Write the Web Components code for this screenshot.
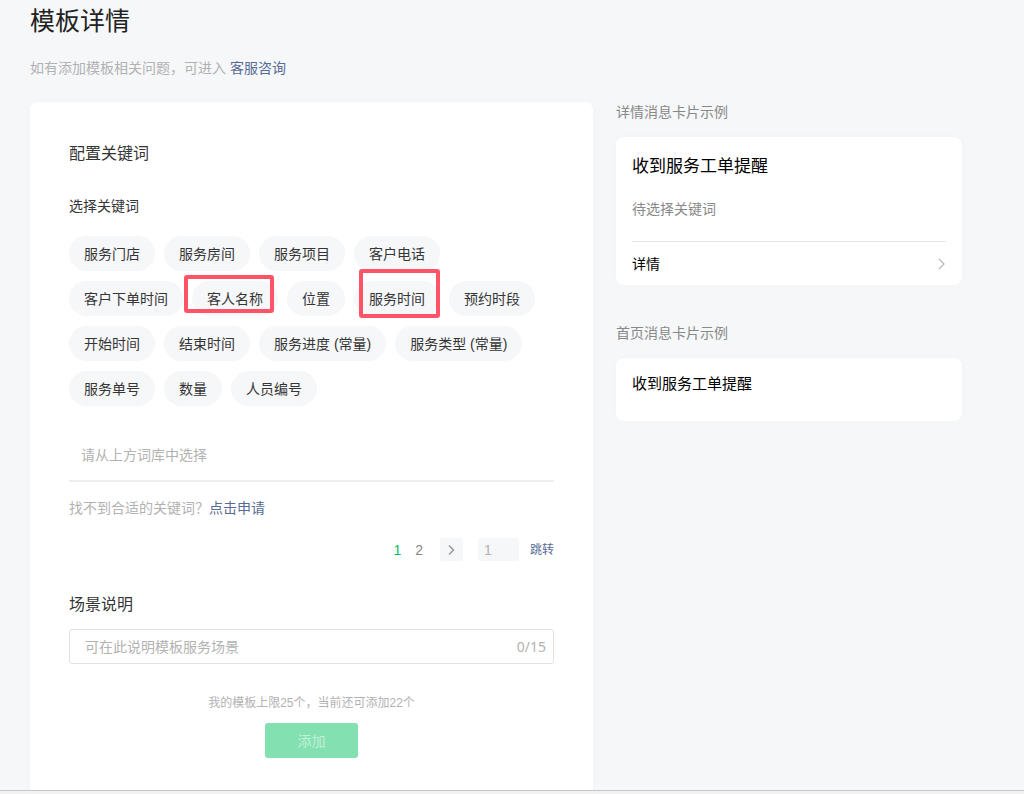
<!DOCTYPE html>
<html lang="zh-CN">
<head>
<meta charset="utf-8">
<title>模板详情</title>
<style>
  html, body {
    margin: 0;
    height: 100%;
  }

  body {
    background: #f5f7f9;
    color: #353535;
    font-family: "Liberation Sans", "Noto Sans CJK SC", sans-serif;
    font-size: 14px;
    line-height: 20px;
    --link: #576b95;
    --muted: #b2b2b2;
    --soft: #f5f7f9;
  }
</style>
</head>
<body>
<template-page>
  <span slot="title">模板详情</span>
  <span slot="tip">如有添加模板相关问题，可进入</span>
  <text-link slot="tip" text="客服咨询"></text-link>

  <keyword-panel slot="main"></keyword-panel>

  <preview-card slot="side" label="详情消息卡片示例" heading="收到服务工单提醒" action="详情">待选择关键词</preview-card>
  <preview-card slot="side" label="首页消息卡片示例" heading="收到服务工单提醒" compact></preview-card>
</template-page>

<script>
"use strict";

(() => {
  customElements.define("template-page", class extends HTMLElement {
    constructor() {
      super();

      this.attachShadow({mode: "open"}).innerHTML = `
      <style>
      :host {
        display: flex;
        flex-direction: column;
        height: 100vh;
        overflow: hidden;
      }

      .content {
        flex: 1;
        display: flex;
        flex-direction: column;
        min-height: 0;
        overflow: hidden;
        box-sizing: border-box;
        padding: 3px 62px 0 30px;
      }

      h1 {
        margin: 0;
        color: #222;
        font-size: 25px;
        font-weight: 400;
        line-height: 36px;
      }

      .tip {
        display: flex;
        gap: 4px;
        margin: 19px 0 24px;
        color: var(--muted);
      }

      .columns {
        flex: 1;
        display: grid;
        grid-template-columns: 563fr 346fr;
        gap: 23px;
      }

      .side {
        display: flex;
        flex-direction: column;
        gap: 38px;
      }

      footer {
        height: 3px;
        background: #f2f2f2;
        border-top: 1px solid #c8c8c8;
      }
      </style>
      <div class="content">
        <h1><slot name="title"></slot></h1>
        <div class="tip"><slot name="tip"></slot></div>
        <div class="columns">
          <main><slot name="main"></slot></main>
          <aside class="side"><slot name="side"></slot></aside>
        </div>
      </div>
      <footer></footer>
      `;
    }
  });

  customElements.define("text-link", class extends HTMLElement {
    constructor() {
      super();

      this.attachShadow({mode: "open"}).innerHTML = `
      <style>
      :host {
        display: inline-block;
      }

      a {
        color: var(--link);
        text-decoration: none;
      }
      </style>
      <a href="#"></a>
      `;

      this.shadowRoot.querySelector("a").textContent = this.getAttribute("text");
    }
  });

  customElements.define("keyword-chip", class extends HTMLElement {
    constructor() {
      super();

      this.attachShadow({mode: "open"}).innerHTML = `
      <style>
      :host {
        display: block;
        position: relative;
      }

      button {
        display: block;
        height: 35px;
        padding: 0 15px;
        border: 0;
        border-radius: 18px;
        background: var(--soft);
        color: #353535;
        font: inherit;
        white-space: nowrap;
        cursor: pointer;
      }

      /* red frame laid over a highlighted keyword */
      :host([mark])::after {
        content: "";
        position: absolute;
        border: 4px solid #ff5468;
        border-radius: 3px;
        pointer-events: none;
      }

      :host([mark="wide"])::after {
        inset: -6px 4px 3px -8px;
      }

      :host([mark="tall"])::after {
        inset: -12px 0 -2px 5px;
      }
      </style>
      <button type="button"><slot></slot></button>
      `;
    }
  });

  customElements.define("page-nav", class extends HTMLElement {
    constructor() {
      super();

      this.attachShadow({mode: "open"}).innerHTML = `
      <style>
      :host {
        display: block;
      }

      nav {
        display: flex;
        align-items: center;
        justify-content: flex-end;
        height: 23px;
      }

      .num {
        color: #888;
        text-decoration: none;
        margin-right: 14px;
      }

      .num.current {
        color: #07c160;
      }

      button {
        display: flex;
        align-items: center;
        justify-content: center;
        width: 23px;
        height: 23px;
        margin: 0 15px 0 3px;
        padding: 0;
        border: 0;
        border-radius: 2px;
        background: var(--soft);
      }

      input {
        box-sizing: border-box;
        width: 41px;
        height: 23px;
        margin: 0 11px 0 0;
        padding: 0 6px;
        border: 0;
        border-radius: 2px;
        background: var(--soft);
        color: #353535;
        font: inherit;
      }

      input::placeholder {
        color: var(--muted);
      }

      text-link {
        font-size: 12px;
      }
      </style>
      <nav aria-label="分页">
        <a class="num current" href="#">1</a>
        <a class="num" href="#">2</a>
        <button type="button" aria-label="下一页">
          <svg width="8" height="12" viewBox="0 0 8 12" fill="none" stroke="#999" stroke-width="1.5"><path d="M2 1.500l4.500 4.500L2 10.500"/></svg>
        </button>
        <input type="text" placeholder="1" aria-label="页码">
        <text-link text="跳转"></text-link>
      </nav>
      `;
    }
  });

  customElements.define("keyword-panel", class extends HTMLElement {
    constructor() {
      super();

      this.attachShadow({mode: "open"}).innerHTML = `
      <style>
      :host {
        display: block;
        box-sizing: border-box;
        min-height: 100%;
        padding: 40px 39px;
        border-radius: 8px 8px 0 0;
        background: #fff;
        box-shadow: 0 0 8px rgba(0, 0, 0, 0.02);
      }

      h2, h3 {
        margin: 0;
        color: #353535;
        font-size: 16px;
        font-weight: 400;
        line-height: 24px;
      }

      h3 {
        margin-top: 30px;
        font-size: 14px;
        line-height: 20px;
      }

      .chips {
        display: flex;
        flex-wrap: wrap;
        gap: 10px 9px;
        margin: 20px 0 24px;
      }

      input {
        display: block;
        box-sizing: border-box;
        width: 100%;
        border: 0;
        background: none;
        color: #353535;
        font: inherit;
      }

      input::placeholder {
        color: var(--muted);
      }

      .picked {
        height: 52px;
        padding: 0 12px;
        border-bottom: 2px solid #eee;
      }

      .missing {
        margin: 16px 0 20px;
        color: var(--muted);
      }

      .scene-title {
        display: block;
        margin: 32px 0 12px;
        font-size: 16px;
        line-height: 24px;
      }

      .field {
        display: flex;
        align-items: center;
        box-sizing: border-box;
        height: 35px;
        padding: 0 7px 0 15px;
        border: 1px solid #e2e2e2;
        border-radius: 3px;
      }

      .field input {
        flex: 1;
        width: auto;
        padding: 0;
      }

      .count {
        color: var(--muted);
        font-family: "Noto Sans", sans-serif;
      }

      .quota {
        margin: 29px 0 10px;
        color: var(--muted);
        font-size: 12px;
        text-align: center;
      }

      .submit {
        display: block;
        width: 93px;
        height: 35px;
        margin: 0 auto;
        padding: 0;
        border: 0;
        border-radius: 3px;
        background: #83e0b0;
        color: #c1f0d8;
        font: inherit;
      }
      </style>
      <h2>配置关键词</h2>
      <h3>选择关键词</h3>
      <div class="chips">
        <keyword-chip>服务门店</keyword-chip>
        <keyword-chip>服务房间</keyword-chip>
        <keyword-chip>服务项目</keyword-chip>
        <keyword-chip>客户电话</keyword-chip>
        <keyword-chip>客户下单时间</keyword-chip>
        <keyword-chip mark="wide">客人名称</keyword-chip>
        <keyword-chip>位置</keyword-chip>
        <keyword-chip mark="tall">服务时间</keyword-chip>
        <keyword-chip>预约时段</keyword-chip>
        <keyword-chip>开始时间</keyword-chip>
        <keyword-chip>结束时间</keyword-chip>
        <keyword-chip>服务进度 (常量)</keyword-chip>
        <keyword-chip>服务类型 (常量)</keyword-chip>
        <keyword-chip>服务单号</keyword-chip>
        <keyword-chip>数量</keyword-chip>
        <keyword-chip>人员编号</keyword-chip>
      </div>
      <input class="picked" type="text" placeholder="请从上方词库中选择" aria-label="选择关键词">
      <div class="missing">找不到合适的关键词？<text-link text="点击申请"></text-link></div>
      <page-nav></page-nav>
      <label class="scene-title" for="scene">场景说明</label>
      <div class="field">
        <input id="scene" type="text" maxlength="15" placeholder="可在此说明模板服务场景">
        <span class="count">0/15</span>
      </div>
      <div class="quota">我的模板上限25个，当前还可添加22个</div>
      <button class="submit" type="button" disabled>添加</button>
      `;

      const scene = this.shadowRoot.getElementById("scene");
      scene.addEventListener("input", () => {
        this.shadowRoot.querySelector(".count").textContent = `${scene.value.length}/15`;
        this.shadowRoot.querySelector(".submit").disabled = !scene.value;
      });
    }
  });

  customElements.define("preview-card", class extends HTMLElement {
    constructor() {
      super();

      this.attachShadow({mode: "open"}).innerHTML = `
      <style>
      :host {
        display: block;
      }

      .label {
        margin-bottom: 15px;
        color: #888;
      }

      .card {
        padding: 18px 16px 0;
        border-radius: 8px;
        background: #fff;
        box-shadow: 0 0 8px rgba(0, 0, 0, 0.02);
      }

      h4 {
        margin: 0;
        color: #000;
        font-size: 17px;
        font-weight: 400;
        line-height: 24px;
      }

      .body {
        margin: 20px 0 22px;
        color: #888;
      }

      a {
        display: flex;
        align-items: center;
        justify-content: space-between;
        height: 43px;
        border-top: 1px solid #e8e8e8;
        color: #000;
        text-decoration: none;
      }

      :host([compact]) .card {
        padding: 14px 16px 25px;
      }

      :host([compact]) h4 {
        font-size: 15px;
      }

      :host([compact]) .body, :host([compact]) a {
        display: none;
      }
      </style>
      <div class="label"></div>
      <div class="card">
        <h4></h4>
        <div class="body"><slot></slot></div>
        <a href="#">
          <span class="action"></span>
          <svg width="9" height="12" viewBox="0 0 9 12" fill="none" stroke="#b8b8b8" stroke-width="1.3"><path d="M2 1l5 5-5 5"/></svg>
        </a>
      </div>
      `;

      this.shadowRoot.querySelector(".label").textContent = this.getAttribute("label");
      this.shadowRoot.querySelector("h4").textContent = this.getAttribute("heading");
      this.shadowRoot.querySelector(".action").textContent = this.getAttribute("action") || "";
    }
  });
})();
</script>
</body>
</html>
